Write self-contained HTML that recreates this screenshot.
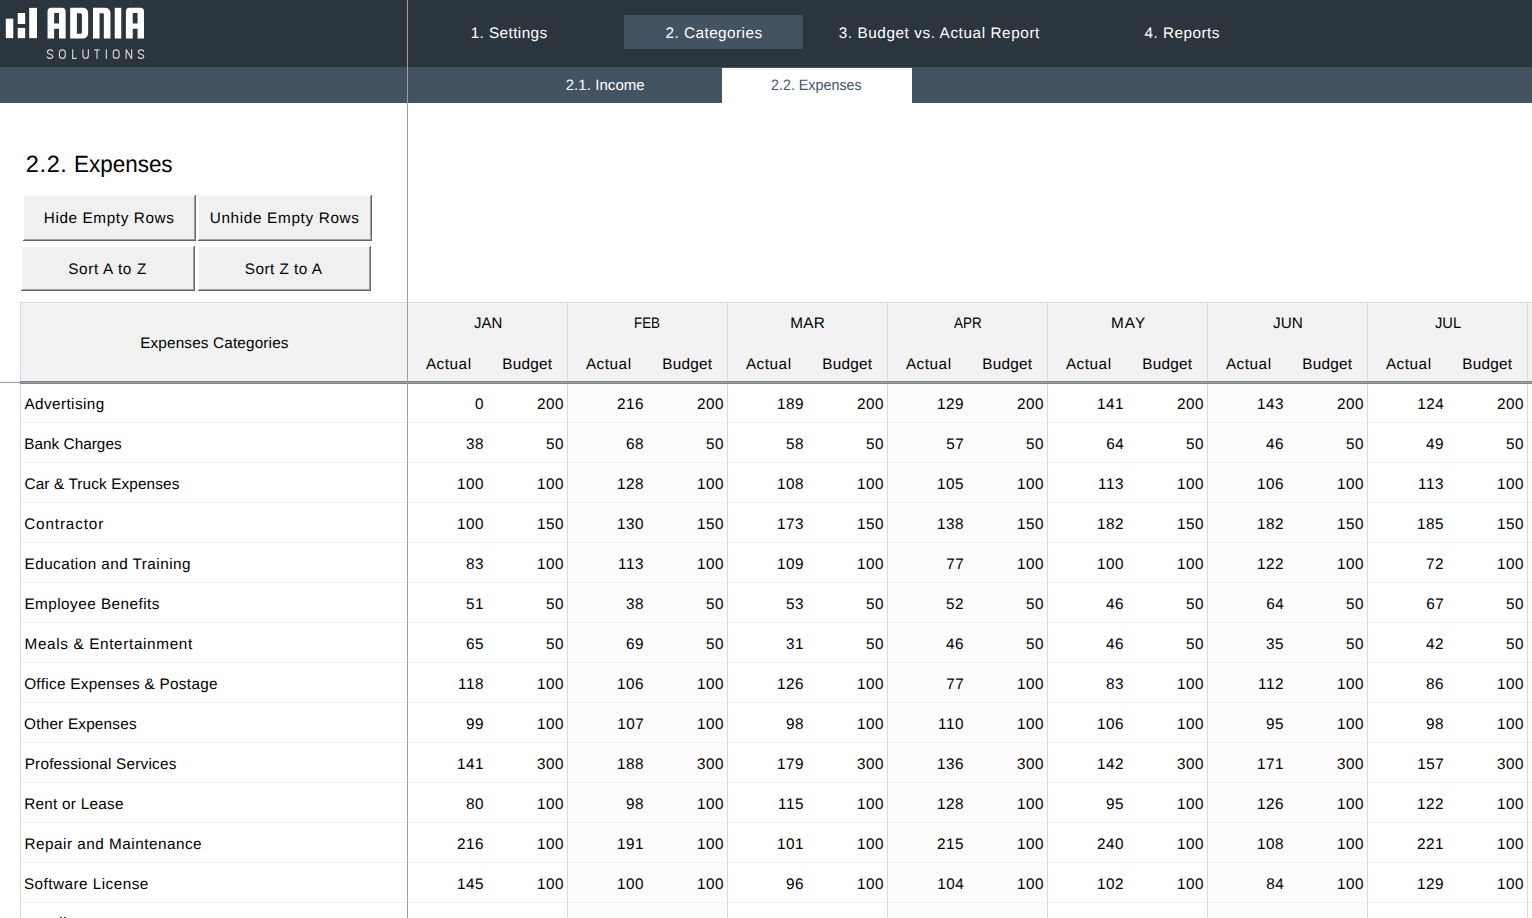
<!DOCTYPE html>
<html><head><meta charset="utf-8"><title>Expenses</title>
<style>
html,body{margin:0;padding:0;}
body{width:1532px;height:918px;overflow:hidden;background:#fff;position:relative;font-family:"Liberation Sans",sans-serif;color:#000;text-rendering:geometricPrecision;}
div{position:absolute;box-sizing:border-box;white-space:nowrap;}
.t{font-size:15.3px;line-height:20px;height:20px;}
.n{letter-spacing:0.5px;}
.btn{background:#f0f0f0;box-shadow:inset -1px -1px 0 0 #666, inset 1px 1px 0 0 #fff, inset -2px -2px 0 0 #a0a0a0;}
</style></head>
<body>
<div style="left:0;top:0;width:1532px;height:67px;background:#2b353e"></div>
<div style="left:0;top:67px;width:1532px;height:36px;background:#445362"></div>
<div style="left:624px;top:15px;width:179px;height:34px;background:#445362"></div>
<div style="left:722px;top:68px;width:190px;height:35px;background:#fff"></div>
<svg style="position:absolute;left:0;top:0" width="160" height="67" viewBox="0 0 160 67">
<g fill="#fff">
<rect x="5.8" y="18.65" width="7.45" height="19.5"/>
<rect x="17.75" y="13" width="7.4" height="11"/>
<rect x="17.75" y="27.95" width="7.4" height="10.2"/>
<rect x="29.2" y="7.85" width="7.8" height="30.3"/>
<path fill-rule="evenodd" d="M47.55,38.5V11.5Q47.55,7.8 51.25,7.8H61.95Q65.65,7.8 65.65,11.5V38.5H59.05V28.75H54.15V38.5ZM54.15,12.95H59.05V23.4H54.15Z"/>
<path fill-rule="evenodd" d="M70.2,7.8H82.4Q88.15,7.8 88.15,13.55V32.75Q88.15,38.5 82.4,38.5H70.2ZM76.9,13.15H80.4Q81.9,13.15 81.9,14.65V32.3Q81.9,33.8 80.4,33.8H76.9Z"/>
<path d="M93,38.5V7.8H104.7Q110.45,7.8 110.45,13.55V38.5H103.85V14.4Q103.85,13.15 102.6,13.15H99.55V38.5Z"/>
<rect x="114.75" y="7.8" width="6.5" height="30.7"/>
<path fill-rule="evenodd" d="M125.9,38.5V11.5Q125.9,7.8 129.6,7.8H140.3Q144,7.8 144,11.5V38.5H137.55V28.75H132.75V38.5ZM132.75,12.95H137.55V23.4H132.75Z"/>
</g>
<g fill="none" stroke="#d3d7da" stroke-width="1.15" stroke-linejoin="round">
<path d="M52.7,51.7C52.7,50.4 51.6,49.8 50.05,49.8C48.5,49.8 47.4,50.6 47.4,51.9C47.4,53.3 48.6,53.8 50.05,54.2C51.6,54.6 52.8,55.1 52.8,56.5C52.8,57.8 51.6,58.4 50.05,58.4C48.4,58.4 47.3,57.7 47.3,56.4"/>
<path d="M62.35,49.8C60.4,49.8 59.4,51 59.4,52.8V55.4C59.4,57.2 60.4,58.4 62.35,58.4C64.3,58.4 65.3,57.2 65.3,55.4V52.8C65.3,51 64.3,49.8 62.35,49.8Z"/>
<path d="M72.65,49.3V58.4H76.7"/>
<path d="M82.95,49.3V55.6C82.95,57.4 83.9,58.4 85.65,58.4C87.4,58.4 88.35,57.4 88.35,55.6V49.3"/>
<path d="M94.3,49.85H99.7M97,49.85V58.95"/>
<path d="M106.35,49.3V58.95"/>
<path d="M116.2,49.8C114.25,49.8 113.25,51 113.25,52.8V55.4C113.25,57.2 114.25,58.4 116.2,58.4C118.15,58.4 119.15,57.2 119.15,55.4V52.8C119.15,51 118.15,49.8 116.2,49.8Z"/>
<path d="M126.15,58.95V49.3M126.2,49.6L131.6,58.65M131.65,58.95V49.3"/>
<path d="M143.65,51.7C143.65,50.4 142.55,49.8 141,49.8C139.45,49.8 138.35,50.6 138.35,51.9C138.35,53.3 139.55,53.8 141,54.2C142.55,54.6 143.75,55.1 143.75,56.5C143.75,57.8 142.55,58.4 141,58.4C139.35,58.4 138.25,57.7 138.25,56.4"/>
</g>
</svg>
<div class="btn" style="left:23px;top:195px;width:173px;height:46px;"></div>
<div class="btn" style="left:198px;top:195px;width:174px;height:46px;"></div>
<div class="btn" style="left:21px;top:246px;width:174px;height:45px;"></div>
<div class="btn" style="left:198px;top:246px;width:173px;height:45px;"></div>
<div style="left:20px;top:302px;width:1512px;height:79px;background:#f2f2f2;border-top:1px solid #d9d9d9;"></div>
<div style="left:568px;top:384px;width:159px;height:540px;background:#fcfcfc"></div>
<div style="left:888px;top:384px;width:159px;height:540px;background:#fcfcfc"></div>
<div style="left:1208px;top:384px;width:159px;height:540px;background:#fcfcfc"></div>
<div style="left:1528px;top:384px;width:159px;height:540px;background:#fcfcfc"></div>
<div style="left:20px;top:422px;width:1512px;height:1px;background:#f0f0f0"></div>
<div style="left:20px;top:462px;width:1512px;height:1px;background:#f0f0f0"></div>
<div style="left:20px;top:502px;width:1512px;height:1px;background:#f0f0f0"></div>
<div style="left:20px;top:542px;width:1512px;height:1px;background:#f0f0f0"></div>
<div style="left:20px;top:582px;width:1512px;height:1px;background:#f0f0f0"></div>
<div style="left:20px;top:622px;width:1512px;height:1px;background:#f0f0f0"></div>
<div style="left:20px;top:662px;width:1512px;height:1px;background:#f0f0f0"></div>
<div style="left:20px;top:702px;width:1512px;height:1px;background:#f0f0f0"></div>
<div style="left:20px;top:742px;width:1512px;height:1px;background:#f0f0f0"></div>
<div style="left:20px;top:782px;width:1512px;height:1px;background:#f0f0f0"></div>
<div style="left:20px;top:822px;width:1512px;height:1px;background:#f0f0f0"></div>
<div style="left:20px;top:862px;width:1512px;height:1px;background:#f0f0f0"></div>
<div style="left:20px;top:902px;width:1512px;height:1px;background:#f0f0f0"></div>
<div style="left:20px;top:302px;width:1px;height:620px;background:#d9d9d9"></div>
<div style="left:567px;top:302px;width:1px;height:620px;background:#d9d9d9"></div>
<div style="left:727px;top:302px;width:1px;height:620px;background:#d9d9d9"></div>
<div style="left:887px;top:302px;width:1px;height:620px;background:#d9d9d9"></div>
<div style="left:1047px;top:302px;width:1px;height:620px;background:#d9d9d9"></div>
<div style="left:1207px;top:302px;width:1px;height:620px;background:#d9d9d9"></div>
<div style="left:1367px;top:302px;width:1px;height:620px;background:#d9d9d9"></div>
<div style="left:1527px;top:302px;width:1px;height:620px;background:#d9d9d9"></div>
<div style="left:60px;top:917px;width:2px;height:1px;background:#444"></div><div style="left:64px;top:917px;width:2px;height:1px;background:#444"></div>
<div style="left:20px;top:381px;width:1512px;height:3px;background:#f85450"></div>
<div style="left:0;top:382px;width:1532px;height:1px;background:#9e9e9e"></div>
<div style="left:407px;top:0;width:1px;height:918px;background:#9e9e9e"></div>
<div class="t" style="left:470.63px;top:24px;letter-spacing:0.43px;color:#fff;">1. Settings</div>
<div class="t" style="left:665.58px;top:24px;letter-spacing:0.46px;color:#fff;">2. Categories</div>
<div class="t" style="left:838.65px;top:24px;letter-spacing:0.59px;color:#fff;">3. Budget vs. Actual Report</div>
<div class="t" style="left:1144.53px;top:24px;letter-spacing:0.49px;color:#fff;">4. Reports</div>
<div class="t" style="left:565.65px;top:76px;letter-spacing:0.07px;font-size:15.0px;color:#fff;">2.1. Income</div>
<div class="t" style="left:771.11px;top:76px;transform:scaleX(0.9536);transform-origin:0 0;font-size:15.0px;color:#44546a;">2.2. Expenses</div>
<div class="t" style="left:25.73px;top:154px;letter-spacing:0.66px;font-size:23.5px;">2.2.</div>
<div class="t" style="left:73.71px;top:154px;transform:scaleX(0.9553);transform-origin:0 0;font-size:23.5px;">Expenses</div>
<div class="t" style="left:43.85px;top:209px;letter-spacing:0.6px;">Hide Empty Rows</div>
<div class="t" style="left:209.7px;top:209px;letter-spacing:0.67px;">Unhide Empty Rows</div>
<div class="t" style="left:68.25px;top:260px;letter-spacing:0.66px;">Sort A to Z</div>
<div class="t" style="left:244.75px;top:260px;letter-spacing:0.49px;">Sort Z to A</div>
<div class="t" style="left:140.19px;top:334px;letter-spacing:0.16px;">Expenses Categories</div>
<div class="t" style="left:473.59px;top:314px;transform:scaleX(0.9747);transform-origin:0 0;">JAN</div>
<div class="t" style="left:425.89px;top:355px;letter-spacing:0.53px;">Actual</div>
<div class="t" style="left:502.24px;top:355px;letter-spacing:0.27px;">Budget</div>
<div class="t" style="left:634.35px;top:314px;transform:scaleX(0.8759);transform-origin:0 0;">FEB</div>
<div class="t" style="left:585.89px;top:355px;letter-spacing:0.53px;">Actual</div>
<div class="t" style="left:662.24px;top:355px;letter-spacing:0.27px;">Budget</div>
<div class="t" style="left:790.15px;top:314px;letter-spacing:0.31px;">MAR</div>
<div class="t" style="left:745.89px;top:355px;letter-spacing:0.53px;">Actual</div>
<div class="t" style="left:822.24px;top:355px;letter-spacing:0.27px;">Budget</div>
<div class="t" style="left:953.82px;top:314px;transform:scaleX(0.8789);transform-origin:0 0;">APR</div>
<div class="t" style="left:905.89px;top:355px;letter-spacing:0.53px;">Actual</div>
<div class="t" style="left:982.24px;top:355px;letter-spacing:0.27px;">Budget</div>
<div class="t" style="left:1111.01px;top:314px;letter-spacing:1.04px;">MAY</div>
<div class="t" style="left:1065.89px;top:355px;letter-spacing:0.53px;">Actual</div>
<div class="t" style="left:1142.24px;top:355px;letter-spacing:0.27px;">Budget</div>
<div class="t" style="left:1272.98px;top:314px;letter-spacing:0.01px;">JUN</div>
<div class="t" style="left:1225.89px;top:355px;letter-spacing:0.53px;">Actual</div>
<div class="t" style="left:1302.24px;top:355px;letter-spacing:0.27px;">Budget</div>
<div class="t" style="left:1434.7px;top:314px;transform:scaleX(0.9594);transform-origin:0 0;">JUL</div>
<div class="t" style="left:1385.89px;top:355px;letter-spacing:0.53px;">Actual</div>
<div class="t" style="left:1462.24px;top:355px;letter-spacing:0.27px;">Budget</div>
<div class="t" style="left:24.5px;top:395px;letter-spacing:0.4px;">Advertising</div>
<div class="t n" style="left:475.05px;top:395px;">0</div>
<div class="t n" style="left:537.05px;top:395px;">200</div>
<div class="t n" style="left:617.1px;top:395px;">216</div>
<div class="t n" style="left:697.05px;top:395px;">200</div>
<div class="t n" style="left:777.1px;top:395px;">189</div>
<div class="t n" style="left:857.05px;top:395px;">200</div>
<div class="t n" style="left:937.1px;top:395px;">129</div>
<div class="t n" style="left:1017.05px;top:395px;">200</div>
<div class="t n" style="left:1097.1px;top:395px;">141</div>
<div class="t n" style="left:1177.05px;top:395px;">200</div>
<div class="t n" style="left:1257.1px;top:395px;">143</div>
<div class="t n" style="left:1337.05px;top:395px;">200</div>
<div class="t n" style="left:1417.17px;top:395px;">124</div>
<div class="t n" style="left:1497.05px;top:395px;">200</div>
<div class="t" style="left:24.24px;top:435px;letter-spacing:0.04px;">Bank Charges</div>
<div class="t n" style="left:466.1px;top:435px;">38</div>
<div class="t n" style="left:546.05px;top:435px;">50</div>
<div class="t n" style="left:626.1px;top:435px;">68</div>
<div class="t n" style="left:706.05px;top:435px;">50</div>
<div class="t n" style="left:786.1px;top:435px;">58</div>
<div class="t n" style="left:866.05px;top:435px;">50</div>
<div class="t n" style="left:946.18px;top:435px;">57</div>
<div class="t n" style="left:1026.05px;top:435px;">50</div>
<div class="t n" style="left:1106.17px;top:435px;">64</div>
<div class="t n" style="left:1186.05px;top:435px;">50</div>
<div class="t n" style="left:1266.1px;top:435px;">46</div>
<div class="t n" style="left:1346.05px;top:435px;">50</div>
<div class="t n" style="left:1426.1px;top:435px;">49</div>
<div class="t n" style="left:1506.05px;top:435px;">50</div>
<div class="t" style="left:24.53px;top:475px;letter-spacing:0.14px;">Car &amp; Truck Expenses</div>
<div class="t n" style="left:457.05px;top:475px;">100</div>
<div class="t n" style="left:537.05px;top:475px;">100</div>
<div class="t n" style="left:617.1px;top:475px;">128</div>
<div class="t n" style="left:697.05px;top:475px;">100</div>
<div class="t n" style="left:777.1px;top:475px;">108</div>
<div class="t n" style="left:857.05px;top:475px;">100</div>
<div class="t n" style="left:937.08px;top:475px;">105</div>
<div class="t n" style="left:1017.05px;top:475px;">100</div>
<div class="t n" style="left:1098.1px;top:475px;">113</div>
<div class="t n" style="left:1177.05px;top:475px;">100</div>
<div class="t n" style="left:1257.1px;top:475px;">106</div>
<div class="t n" style="left:1337.05px;top:475px;">100</div>
<div class="t n" style="left:1418.1px;top:475px;">113</div>
<div class="t n" style="left:1497.05px;top:475px;">100</div>
<div class="t" style="left:24.2px;top:515px;letter-spacing:0.85px;">Contractor</div>
<div class="t n" style="left:457.05px;top:515px;">100</div>
<div class="t n" style="left:537.05px;top:515px;">150</div>
<div class="t n" style="left:617.05px;top:515px;">130</div>
<div class="t n" style="left:697.05px;top:515px;">150</div>
<div class="t n" style="left:777.1px;top:515px;">173</div>
<div class="t n" style="left:857.05px;top:515px;">150</div>
<div class="t n" style="left:937.1px;top:515px;">138</div>
<div class="t n" style="left:1017.05px;top:515px;">150</div>
<div class="t n" style="left:1097.12px;top:515px;">182</div>
<div class="t n" style="left:1177.05px;top:515px;">150</div>
<div class="t n" style="left:1257.12px;top:515px;">182</div>
<div class="t n" style="left:1337.05px;top:515px;">150</div>
<div class="t n" style="left:1417.08px;top:515px;">185</div>
<div class="t n" style="left:1497.05px;top:515px;">150</div>
<div class="t" style="left:24.53px;top:555px;letter-spacing:0.45px;">Education and Training</div>
<div class="t n" style="left:466.1px;top:555px;">83</div>
<div class="t n" style="left:537.05px;top:555px;">100</div>
<div class="t n" style="left:618.1px;top:555px;">113</div>
<div class="t n" style="left:697.05px;top:555px;">100</div>
<div class="t n" style="left:777.1px;top:555px;">109</div>
<div class="t n" style="left:857.05px;top:555px;">100</div>
<div class="t n" style="left:946.18px;top:555px;">77</div>
<div class="t n" style="left:1017.05px;top:555px;">100</div>
<div class="t n" style="left:1097.05px;top:555px;">100</div>
<div class="t n" style="left:1177.05px;top:555px;">100</div>
<div class="t n" style="left:1257.12px;top:555px;">122</div>
<div class="t n" style="left:1337.05px;top:555px;">100</div>
<div class="t n" style="left:1426.12px;top:555px;">72</div>
<div class="t n" style="left:1497.05px;top:555px;">100</div>
<div class="t" style="left:24.38px;top:595px;letter-spacing:0.47px;">Employee Benefits</div>
<div class="t n" style="left:466.1px;top:595px;">51</div>
<div class="t n" style="left:546.05px;top:595px;">50</div>
<div class="t n" style="left:626.1px;top:595px;">38</div>
<div class="t n" style="left:706.05px;top:595px;">50</div>
<div class="t n" style="left:786.1px;top:595px;">53</div>
<div class="t n" style="left:866.05px;top:595px;">50</div>
<div class="t n" style="left:946.12px;top:595px;">52</div>
<div class="t n" style="left:1026.05px;top:595px;">50</div>
<div class="t n" style="left:1106.1px;top:595px;">46</div>
<div class="t n" style="left:1186.05px;top:595px;">50</div>
<div class="t n" style="left:1266.17px;top:595px;">64</div>
<div class="t n" style="left:1346.05px;top:595px;">50</div>
<div class="t n" style="left:1426.18px;top:595px;">67</div>
<div class="t n" style="left:1506.05px;top:595px;">50</div>
<div class="t" style="left:24.49px;top:635px;letter-spacing:0.65px;">Meals &amp; Entertainment</div>
<div class="t n" style="left:466.08px;top:635px;">65</div>
<div class="t n" style="left:546.05px;top:635px;">50</div>
<div class="t n" style="left:626.1px;top:635px;">69</div>
<div class="t n" style="left:706.05px;top:635px;">50</div>
<div class="t n" style="left:786.1px;top:635px;">31</div>
<div class="t n" style="left:866.05px;top:635px;">50</div>
<div class="t n" style="left:946.1px;top:635px;">46</div>
<div class="t n" style="left:1026.05px;top:635px;">50</div>
<div class="t n" style="left:1106.1px;top:635px;">46</div>
<div class="t n" style="left:1186.05px;top:635px;">50</div>
<div class="t n" style="left:1266.08px;top:635px;">35</div>
<div class="t n" style="left:1346.05px;top:635px;">50</div>
<div class="t n" style="left:1426.12px;top:635px;">42</div>
<div class="t n" style="left:1506.05px;top:635px;">50</div>
<div class="t" style="left:24.16px;top:675px;letter-spacing:0.31px;">Office Expenses &amp; Postage</div>
<div class="t n" style="left:458.1px;top:675px;">118</div>
<div class="t n" style="left:537.05px;top:675px;">100</div>
<div class="t n" style="left:617.1px;top:675px;">106</div>
<div class="t n" style="left:697.05px;top:675px;">100</div>
<div class="t n" style="left:777.1px;top:675px;">126</div>
<div class="t n" style="left:857.05px;top:675px;">100</div>
<div class="t n" style="left:946.18px;top:675px;">77</div>
<div class="t n" style="left:1017.05px;top:675px;">100</div>
<div class="t n" style="left:1106.1px;top:675px;">83</div>
<div class="t n" style="left:1177.05px;top:675px;">100</div>
<div class="t n" style="left:1258.12px;top:675px;">112</div>
<div class="t n" style="left:1337.05px;top:675px;">100</div>
<div class="t n" style="left:1426.1px;top:675px;">86</div>
<div class="t n" style="left:1497.05px;top:675px;">100</div>
<div class="t" style="left:24.12px;top:715px;letter-spacing:0.21px;">Other Expenses</div>
<div class="t n" style="left:466.1px;top:715px;">99</div>
<div class="t n" style="left:537.05px;top:715px;">100</div>
<div class="t n" style="left:617.18px;top:715px;">107</div>
<div class="t n" style="left:697.05px;top:715px;">100</div>
<div class="t n" style="left:786.1px;top:715px;">98</div>
<div class="t n" style="left:857.05px;top:715px;">100</div>
<div class="t n" style="left:938.05px;top:715px;">110</div>
<div class="t n" style="left:1017.05px;top:715px;">100</div>
<div class="t n" style="left:1097.1px;top:715px;">106</div>
<div class="t n" style="left:1177.05px;top:715px;">100</div>
<div class="t n" style="left:1266.08px;top:715px;">95</div>
<div class="t n" style="left:1337.05px;top:715px;">100</div>
<div class="t n" style="left:1426.1px;top:715px;">98</div>
<div class="t n" style="left:1497.05px;top:715px;">100</div>
<div class="t" style="left:24.65px;top:755px;letter-spacing:0.23px;">Professional Services</div>
<div class="t n" style="left:457.1px;top:755px;">141</div>
<div class="t n" style="left:537.05px;top:755px;">300</div>
<div class="t n" style="left:617.1px;top:755px;">188</div>
<div class="t n" style="left:697.05px;top:755px;">300</div>
<div class="t n" style="left:777.1px;top:755px;">179</div>
<div class="t n" style="left:857.05px;top:755px;">300</div>
<div class="t n" style="left:937.1px;top:755px;">136</div>
<div class="t n" style="left:1017.05px;top:755px;">300</div>
<div class="t n" style="left:1097.12px;top:755px;">142</div>
<div class="t n" style="left:1177.05px;top:755px;">300</div>
<div class="t n" style="left:1257.1px;top:755px;">171</div>
<div class="t n" style="left:1337.05px;top:755px;">300</div>
<div class="t n" style="left:1417.18px;top:755px;">157</div>
<div class="t n" style="left:1497.05px;top:755px;">300</div>
<div class="t" style="left:24.24px;top:795px;letter-spacing:0.26px;">Rent or Lease</div>
<div class="t n" style="left:466.05px;top:795px;">80</div>
<div class="t n" style="left:537.05px;top:795px;">100</div>
<div class="t n" style="left:626.1px;top:795px;">98</div>
<div class="t n" style="left:697.05px;top:795px;">100</div>
<div class="t n" style="left:778.08px;top:795px;">115</div>
<div class="t n" style="left:857.05px;top:795px;">100</div>
<div class="t n" style="left:937.1px;top:795px;">128</div>
<div class="t n" style="left:1017.05px;top:795px;">100</div>
<div class="t n" style="left:1106.08px;top:795px;">95</div>
<div class="t n" style="left:1177.05px;top:795px;">100</div>
<div class="t n" style="left:1257.1px;top:795px;">126</div>
<div class="t n" style="left:1337.05px;top:795px;">100</div>
<div class="t n" style="left:1417.12px;top:795px;">122</div>
<div class="t n" style="left:1497.05px;top:795px;">100</div>
<div class="t" style="left:24.59px;top:835px;letter-spacing:0.49px;">Repair and Maintenance</div>
<div class="t n" style="left:457.1px;top:835px;">216</div>
<div class="t n" style="left:537.05px;top:835px;">100</div>
<div class="t n" style="left:617.1px;top:835px;">191</div>
<div class="t n" style="left:697.05px;top:835px;">100</div>
<div class="t n" style="left:777.1px;top:835px;">101</div>
<div class="t n" style="left:857.05px;top:835px;">100</div>
<div class="t n" style="left:937.08px;top:835px;">215</div>
<div class="t n" style="left:1017.05px;top:835px;">100</div>
<div class="t n" style="left:1097.05px;top:835px;">240</div>
<div class="t n" style="left:1177.05px;top:835px;">100</div>
<div class="t n" style="left:1257.1px;top:835px;">108</div>
<div class="t n" style="left:1337.05px;top:835px;">100</div>
<div class="t n" style="left:1417.1px;top:835px;">221</div>
<div class="t n" style="left:1497.05px;top:835px;">100</div>
<div class="t" style="left:23.89px;top:875px;letter-spacing:0.47px;">Software License</div>
<div class="t n" style="left:457.08px;top:875px;">145</div>
<div class="t n" style="left:537.05px;top:875px;">100</div>
<div class="t n" style="left:617.05px;top:875px;">100</div>
<div class="t n" style="left:697.05px;top:875px;">100</div>
<div class="t n" style="left:786.1px;top:875px;">96</div>
<div class="t n" style="left:857.05px;top:875px;">100</div>
<div class="t n" style="left:937.17px;top:875px;">104</div>
<div class="t n" style="left:1017.05px;top:875px;">100</div>
<div class="t n" style="left:1097.12px;top:875px;">102</div>
<div class="t n" style="left:1177.05px;top:875px;">100</div>
<div class="t n" style="left:1266.17px;top:875px;">84</div>
<div class="t n" style="left:1337.05px;top:875px;">100</div>
<div class="t n" style="left:1417.1px;top:875px;">129</div>
<div class="t n" style="left:1497.05px;top:875px;">100</div>
</body></html>
